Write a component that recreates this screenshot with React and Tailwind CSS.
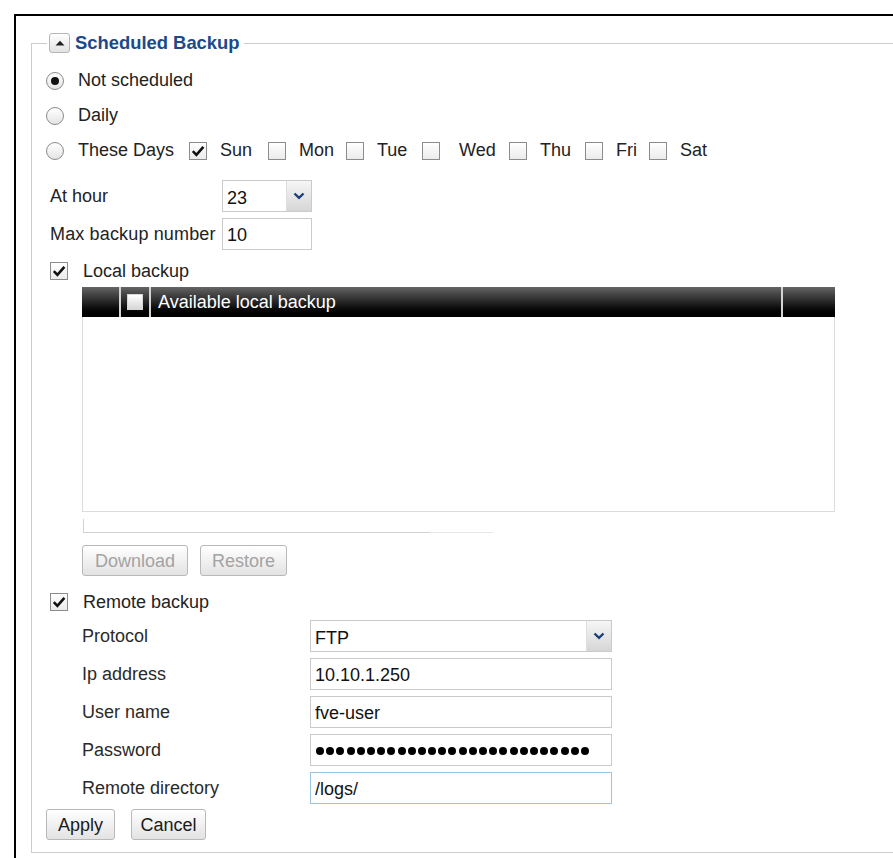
import React from 'react';

const font = "font-['Liberation_Sans',Arial,sans-serif]";

function Check({ checked }) {
  return (
    <span className="flex h-[18px] w-[18px] shrink-0 items-center justify-center border border-[#8c8c8c] bg-linear-to-b from-white to-[#ebebeb]">
      {checked && (
        <svg width="14" height="12" viewBox="0 0 14 12">
          <path d="M1.8 6.2 L5.4 9.8 L12.4 1.8" fill="none" stroke="#111" strokeWidth="2.6" />
        </svg>
      )}
    </span>
  );
}

function Radio({ checked }) {
  return (
    <span className="flex h-[18px] w-[18px] shrink-0 items-center justify-center rounded-full border border-[#8c8c8c] bg-linear-to-b from-white to-[#e4e4e4]">
      {checked && <span className="h-[8px] w-[8px] rounded-full bg-[#111]" />}
    </span>
  );
}

function Chevron() {
  return (
    <svg width="12" height="8" viewBox="0 0 12 8">
      <path d="M1.5 1.5 L6 5.8 L10.5 1.5" fill="none" stroke="#1b3f7c" strokeWidth="2.4" />
    </svg>
  );
}

function Select({ value, width }) {
  return (
    <div className={`flex h-[32px] ${width} border border-[#cacaca] bg-white`}>
      <span className="flex-1 pl-[4px] pt-[6px] text-[18px] leading-[22px] text-[#111]">{value}</span>
      <span className="flex w-[25px] items-center justify-center border-l border-[#dedede] bg-linear-to-b from-[#f6f6f6] to-[#d6d6d6]">
        <Chevron />
      </span>
    </div>
  );
}

function Field({ value, width, focused }) {
  return (
    <input
      readOnly
      value={value}
      className={`h-[32px] ${width} border ${focused ? 'border-[#9cc3e0]' : 'border-[#cacaca]'} bg-white pl-[4px] pt-[3px] text-[18px] text-[#111] outline-none`}
    />
  );
}

function Button({ children, width, disabled }) {
  return (
    <button
      type="button"
      className={`h-[31px] ${width} rounded-[3px] border border-[#b8b8b8] bg-linear-to-b from-white to-[#e3e3e3] text-[18px] leading-[28px] ${disabled ? 'text-[#a3a3a3]' : 'text-[#1a1a1a]'}`}
    >
      {children}
    </button>
  );
}

// box positions in the picture: each item has its own width
const days = [
  { name: 'Sun', checked: true, w: 'w-[79px]' },
  { name: 'Mon', w: 'w-[78px]' },
  { name: 'Tue', w: 'w-[76px]' },
  { name: 'Wed', extra: true, w: 'w-[87px]' },
  { name: 'Thu', w: 'w-[76px]' },
  { name: 'Fri', w: 'w-[64px]' },
  { name: 'Sat', w: 'w-[60px]' },
];

const remoteFields = [
  { label: 'Ip address', value: '10.10.1.250' },
  { label: 'User name', value: 'fve-user' },
];

export default function App() {
  return (
    <div className={`min-h-[858px] bg-white pl-[14px] pt-[14px] text-[18px] text-[#222] ${font}`}>
      <div className="min-h-[844px] border-l-2 border-t-2 border-black pl-[15px] pt-[17px]">
        {/* legend */}
        <div className="flex h-[20px]">
          <div className="mr-[2px] h-[10px] w-[16px] self-end border-l border-t border-[#cccccc]" />
          <span className="flex h-[20px] w-[21px] items-center justify-center rounded-[3px] border border-[#b5b5b5] bg-linear-to-b from-white to-[#e2e2e2]">
            <svg width="10" height="6" viewBox="0 0 10 6">
              <path d="M0.5 5.5 L5 0.8 L9.5 5.5 Z" fill="#222" />
            </svg>
          </span>
          <span className="ml-[5px] text-[18.4px] font-bold leading-[20px] text-[#1b4a8a]">Scheduled Backup</span>
          <div className="ml-[4px] h-[10px] flex-1 self-end border-t border-[#cccccc]" />
        </div>

        <div className="border-b border-l border-[#cccccc] pb-[12px] pl-[14px] pt-[10px]">
          {/* schedule radios */}
          <div className="flex h-[35px] items-center gap-[14px]">
            <Radio checked />
            <span>Not scheduled</span>
          </div>
          <div className="flex h-[35px] items-center gap-[14px]">
            <Radio />
            <span>Daily</span>
          </div>
          <div className="flex h-[35px] items-center">
            <Radio />
            <span className="ml-[14px] w-[111px]">These Days</span>
            {days.map((d) => (
              <div key={d.name} className={`flex ${d.w} items-center`}>
                <Check checked={d.checked} />
                <span className={d.extra ? 'ml-[19px]' : 'ml-[13px]'}>{d.name}</span>
              </div>
            ))}
          </div>

          {/* hour + max */}
          <div className="mt-[12px] flex h-[32px] items-center pl-[4px]">
            <span className="w-[172px]">At hour</span>
            <Select value="23" width="w-[90px]" />
          </div>
          <div className="mt-[6px] flex h-[32px] items-center pl-[4px]">
            <span className="w-[172px] tracking-[0.15px]">Max backup number</span>
            <Field value="10" width="w-[90px]" />
          </div>

          {/* local backup */}
          <div className="mt-[6px] flex h-[30px] items-center gap-[15px] pl-[4px]">
            <Check checked />
            <span>Local backup</span>
          </div>
          <div className="ml-[36px] mt-[1px] w-[753px]">
            <div className="flex h-[30px] bg-linear-to-b from-[#656565] via-[#262626] to-[#000000] text-white">
              <div className="w-[37px]" />
              <div className="w-[2px] bg-[#d4d4d4]" />
              <div className="flex w-[28px] items-center justify-center">
                <span className="h-[16px] w-[16px] border border-[#d8d8d8] bg-linear-to-b from-white to-[#d6d6d6]" />
              </div>
              <div className="w-[2px] bg-[#d4d4d4]" />
              <div className="flex flex-1 items-center pl-[7px] leading-[20px]">Available local backup</div>
              <div className="w-[2px] bg-[#d4d4d4]" />
              <div className="w-[52px]" />
            </div>
            <div className="h-[195px] border-b border-l border-r border-[#dcdcdc] bg-white" />
          </div>
          <div className="ml-[37px] mt-[7px] flex h-[14px]">
            <div className="w-[347px] border-b border-l border-[#d2d2d2]" />
            <div className="w-[63px] border-b border-[#e6e6e6]" />
          </div>
          <div className="ml-[36px] mt-[12px] flex gap-[12px]">
            <Button width="w-[106px]" disabled>Download</Button>
            <Button width="w-[87px]" disabled>Restore</Button>
          </div>

          {/* remote backup */}
          <div className="mt-[11px] flex h-[30px] items-center gap-[15px] pl-[4px]">
            <Check checked />
            <span>Remote backup</span>
          </div>
          <div className="ml-[36px] mt-[3px] flex flex-col gap-[6px] text-[#2a2a2a]">
            <div className="flex items-center">
              <span className="w-[228px]">Protocol</span>
              <Select value="FTP" width="w-[302px]" />
            </div>
            {remoteFields.map((f) => (
              <div key={f.label} className="flex items-center">
                <span className="w-[228px]">{f.label}</span>
                <Field value={f.value} width="w-[302px]" />
              </div>
            ))}
            <div className="flex items-center">
              <span className="w-[228px]">Password</span>
              <div className="flex h-[32px] w-[302px] items-center gap-[2.2px] border border-[#cacaca] bg-white pl-[5px] pt-[2px]" aria-label="password">
                {Array.from({ length: 27 }).map((_, i) => (
                  <span key={i} className="h-[8px] w-[8px] rounded-full bg-black" />
                ))}
              </div>
            </div>
            <div className="flex items-center">
              <span className="w-[228px]">Remote directory</span>
              <Field value="/logs/" width="w-[302px]" focused />
            </div>
          </div>

          <div className="mt-[5px] flex gap-[16px]">
            <Button width="w-[69px]">Apply</Button>
            <Button width="w-[75px]">Cancel</Button>
          </div>
        </div>
      </div>
      {/* right edge of the fieldset, only visible in its lower part */}
    </div>
  );
}
